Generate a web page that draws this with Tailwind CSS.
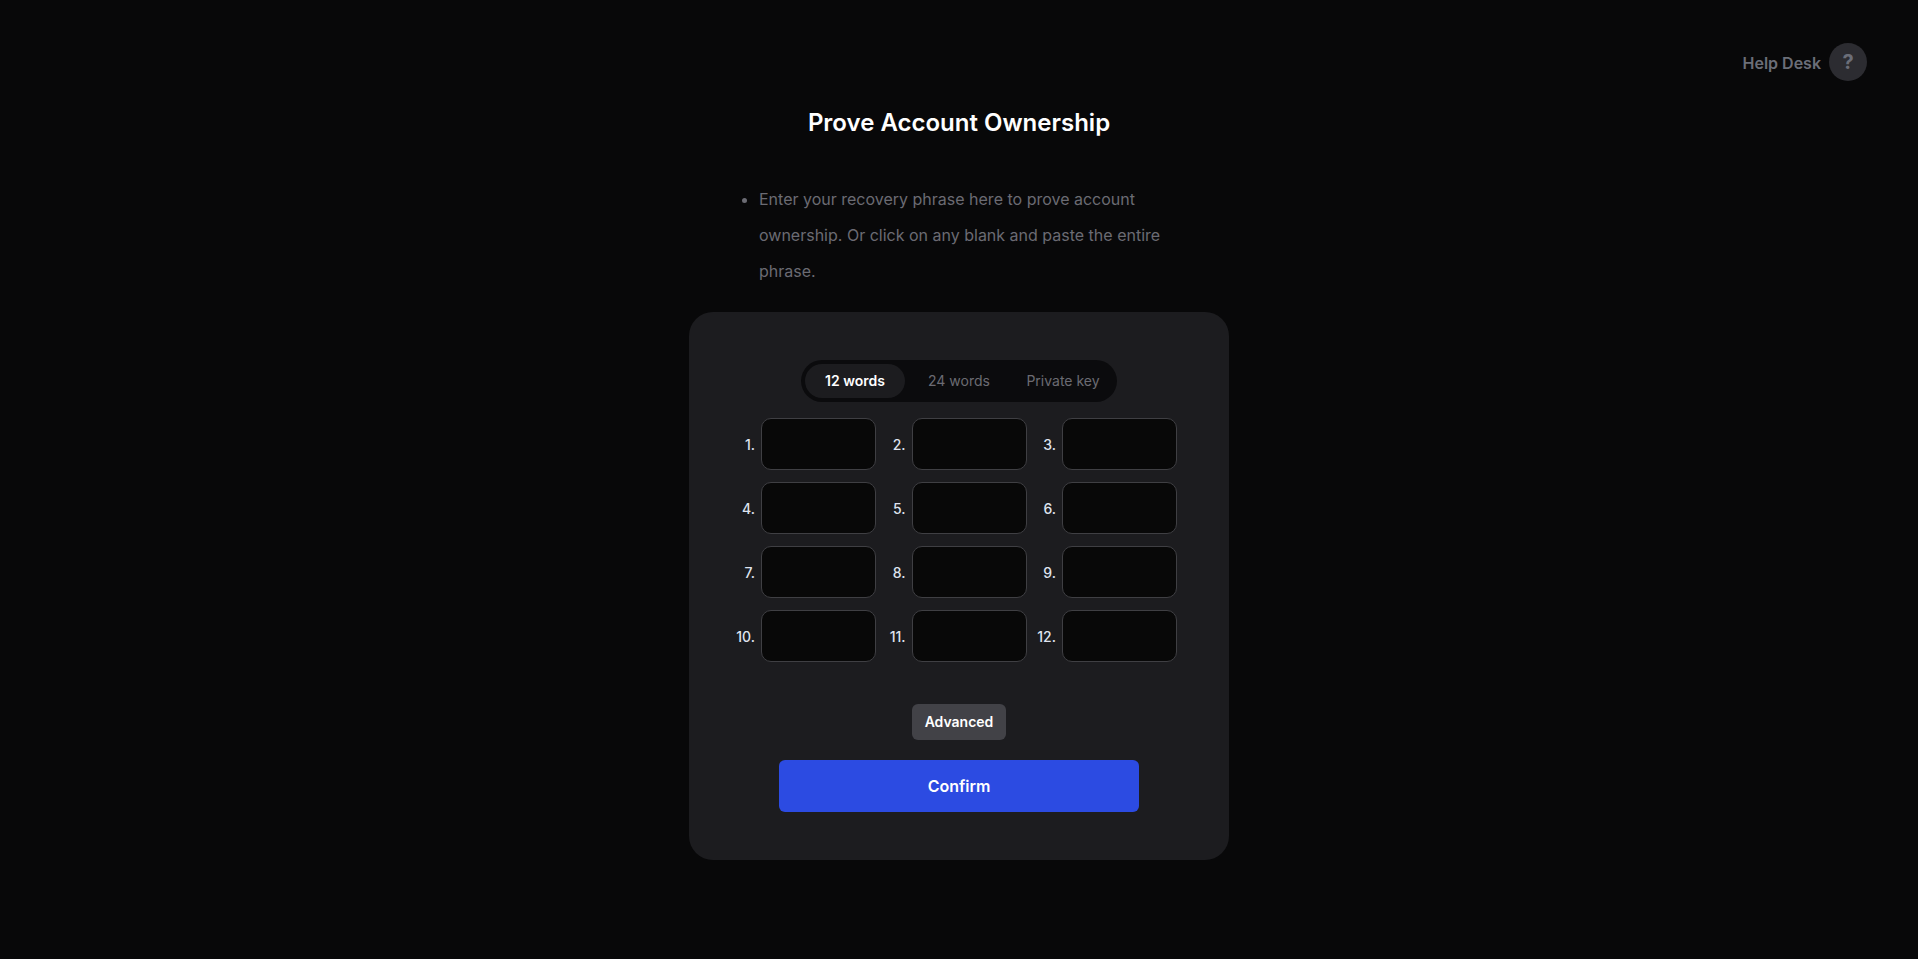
<!DOCTYPE html>
<html lang="en">
  <head>
    <meta charset="UTF-8" />
    <meta name="viewport" content="width=device-width, initial-scale=1.0" />
    <title>Prove Account Ownership</title>
    <script src="https://cdn.jsdelivr.net/npm/@tailwindcss/browser@4"></script>
  </head>
  <body class="min-h-screen bg-[#080809] font-[Inter,sans-serif]">
    <div class="flex items-center justify-end gap-[8px] pt-[43px] pr-[51px]">
      <span class="pt-[1px] text-base font-semibold text-[#6b6e78]">Help Desk</span>
      <div class="flex h-[38px] w-[38px] items-center justify-center rounded-full bg-[#2c2c31] text-[20px] font-bold text-[#6b6e78]">?</div>
    </div>

    <div class="mx-auto flex w-[540px] flex-col">
      <h1 class="mt-[26px] text-center text-2xl font-semibold leading-8 text-white">Prove Account Ownership</h1>

      <ul class="mt-[42px] list-disc pl-[70px] pr-[50px] text-base leading-9 text-[#6b6b73]">
        <li>Enter your recovery phrase here to prove account ownership. Or click on any blank and paste the entire phrase.</li>
      </ul>

      <div class="mt-[23px] flex flex-col items-center rounded-3xl bg-[#1c1c1f] pt-12 pb-12">
        <div class="flex h-[42px] w-[316px] items-center rounded-full bg-[#0b0b0d] p-1 text-sm">
          <button class="h-[34px] w-[100px] rounded-full bg-[#1c1c1f] font-semibold text-white">12 words</button>
          <button class="h-[34px] w-[108px] text-[#6b6b73]">24 words</button>
          <button class="h-[34px] w-[100px] text-[#6b6b73]">Private key</button>
        </div>

        <div class="mt-4 grid w-[451.5px] grid-cols-3 gap-y-3 self-start ml-[36.5px] text-sm font-medium text-[#dfe3ee]">
          <label class="flex items-center justify-end gap-[6px]"><span class="pt-[2px]">1.</span><input class="h-[52px] w-[115px] rounded-[10px] border border-[#3f3f43] bg-[#080808]" /></label>
          <label class="flex items-center justify-end gap-[6px]"><span class="pt-[2px]">2.</span><input class="h-[52px] w-[115px] rounded-[10px] border border-[#3f3f43] bg-[#080808]" /></label>
          <label class="flex items-center justify-end gap-[6px]"><span class="pt-[2px]">3.</span><input class="h-[52px] w-[115px] rounded-[10px] border border-[#3f3f43] bg-[#080808]" /></label>
          <label class="flex items-center justify-end gap-[6px]"><span class="pt-[2px]">4.</span><input class="h-[52px] w-[115px] rounded-[10px] border border-[#3f3f43] bg-[#080808]" /></label>
          <label class="flex items-center justify-end gap-[6px]"><span class="pt-[2px]">5.</span><input class="h-[52px] w-[115px] rounded-[10px] border border-[#3f3f43] bg-[#080808]" /></label>
          <label class="flex items-center justify-end gap-[6px]"><span class="pt-[2px]">6.</span><input class="h-[52px] w-[115px] rounded-[10px] border border-[#3f3f43] bg-[#080808]" /></label>
          <label class="flex items-center justify-end gap-[6px]"><span class="pt-[2px]">7.</span><input class="h-[52px] w-[115px] rounded-[10px] border border-[#3f3f43] bg-[#080808]" /></label>
          <label class="flex items-center justify-end gap-[6px]"><span class="pt-[2px]">8.</span><input class="h-[52px] w-[115px] rounded-[10px] border border-[#3f3f43] bg-[#080808]" /></label>
          <label class="flex items-center justify-end gap-[6px]"><span class="pt-[2px]">9.</span><input class="h-[52px] w-[115px] rounded-[10px] border border-[#3f3f43] bg-[#080808]" /></label>
          <label class="flex items-center justify-end gap-[6px]"><span class="pt-[2px]">10.</span><input class="h-[52px] w-[115px] rounded-[10px] border border-[#3f3f43] bg-[#080808]" /></label>
          <label class="flex items-center justify-end gap-[6px]"><span class="pt-[2px]">11.</span><input class="h-[52px] w-[115px] rounded-[10px] border border-[#3f3f43] bg-[#080808]" /></label>
          <label class="flex items-center justify-end gap-[6px]"><span class="pt-[2px]">12.</span><input class="h-[52px] w-[115px] rounded-[10px] border border-[#3f3f43] bg-[#080808]" /></label>
        </div>

        <button class="mt-[42px] h-9 w-[94px] rounded-md bg-[#424247] text-sm font-semibold text-white">Advanced</button>
        <button class="mt-5 h-[52px] w-[360px] rounded-md bg-[#2c4be2] text-base font-semibold text-white">Confirm</button>
      </div>
    </div>
  </body>
</html>
